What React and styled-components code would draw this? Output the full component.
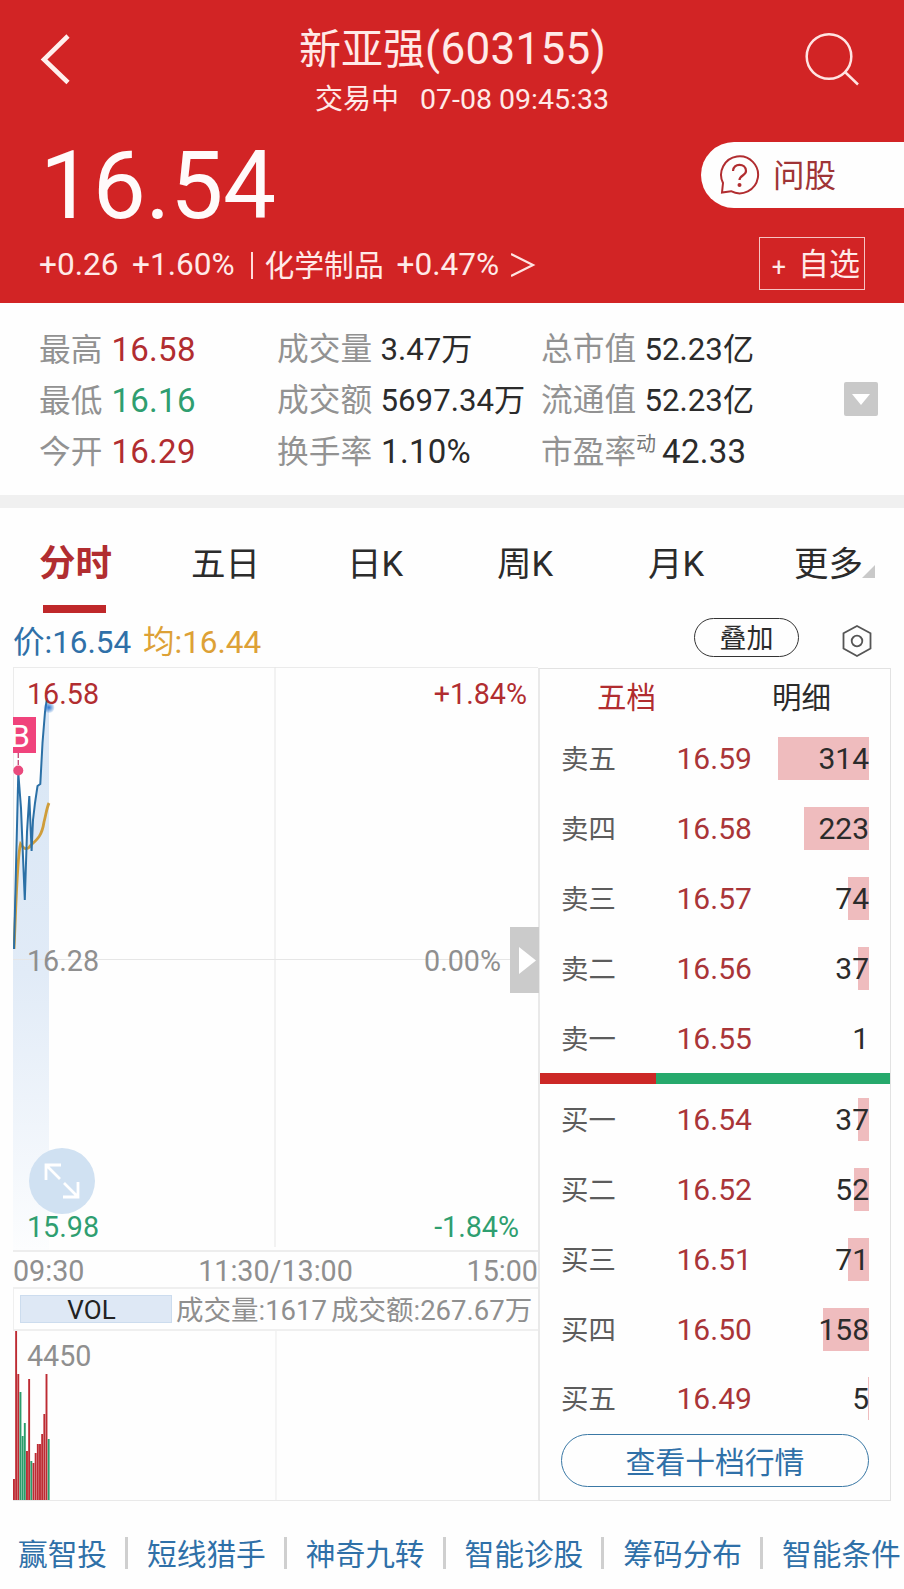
import React, { useState } from "react";
import styled, { createGlobalStyle } from "styled-components";

const RED = "#b12d30";
const GREEN = "#2f9e70";
const BLUE = "#2f70a8";

const stats = [
  [
    { label: "最高", value: "16.58", color: RED },
    { label: "成交量", value: "3.47万", small: true },
    { label: "总市值", value: "52.23亿", small: true },
  ],
  [
    { label: "最低", value: "16.16", color: GREEN },
    { label: "成交额", value: "5697.34万", small: true },
    { label: "流通值", value: "52.23亿", small: true },
  ],
  [
    { label: "今开", value: "16.29", color: RED },
    { label: "换手率", value: "1.10%" },
    { label: "市盈率", value: "42.33", note: "动" },
  ],
];

const periods = ["分时", "五日", "日K", "周K", "月K"];

const sells = [
  ["卖五", "16.59", 314],
  ["卖四", "16.58", 223],
  ["卖三", "16.57", 74],
  ["卖二", "16.56", 37],
  ["卖一", "16.55", 1],
];

const buys = [
  ["买一", "16.54", 37],
  ["买二", "16.52", 52],
  ["买三", "16.51", 71],
  ["买四", "16.50", 158],
  ["买五", "16.49", 5],
];

// [height, is the price going up]
const volumes = [
  [21, true],
  [169, true],
  [126, true],
  [108, false],
  [64, false],
  [77, false],
  [49, true],
  [121, true],
  [39, false],
  [37, true],
  [47, true],
  [56, true],
  [56, true],
  [66, true],
  [86, true],
  [126, true],
  [61, false],
];

const links = [
  "赢智投",
  "短线猎手",
  "神奇九转",
  "智能诊股",
  "筹码分布",
  "智能条件",
];

const PRICE_LINE =
  "M1 282 L3 200 L5.3 106 L8 141 L10 190 L11.8 233 L14 165 L16.3 129 L18.6 184 L20 153 L22 136 L24.5 119 L27.3 117 L29.5 76 L32 45 L34 31";

function App() {
  const [period, setPeriod] = useState("分时");

  return (
    <Page>
      <GlobalStyle />
      <Header>
        <TopBar>
          <svg width="34" height="56" viewBox="0 0 34 56" fill="none">
            <path d="M30 6 L6 29.5 L30 52.5" stroke="#fff0ee" strokeWidth="4.6" />
          </svg>
          <Title>
            <Name>
              新亚强<Code>(603155)</Code>
            </Name>
            <Status>
              <span>交易中</span>
              <Clock>07-08 09:45:33</Clock>
            </Status>
          </Title>
          <svg width="56" height="56" viewBox="0 0 56 56" fill="none">
            <g stroke="#ffe4e2" strokeWidth="2.5">
              <circle cx="26" cy="26.5" r="22.3" />
              <path d="M42 42 L55 54.5" />
            </g>
          </svg>
        </TopBar>
        <PriceRow>
          <Price>16.54</Price>
          <AskPill>
            <svg width="42" height="42" viewBox="0 0 42 42" fill="none">
              <g stroke={RED} strokeWidth="2">
                <path d="M4 29 A18.5 18.5 0 1 1 12 37.2 L3 38.5 Z" />
                <path
                  d="M14 17 C14 8.5 27 9 27 17 C27 21.5 20.5 21.5 20.5 26"
                  strokeWidth="2.2"
                />
              </g>
              <circle cx="20.5" cy="31" r="2" fill={RED} />
            </svg>
            <span>问股</span>
          </AskPill>
        </PriceRow>
        <ChangeRow>
          <span>+0.26</span>
          <span>+1.60%</span>
          <Bar />
          <Sector>化学制品</Sector>
          <span>+0.47%</span>
          <svg width="26" height="26" viewBox="0 0 26 26" fill="none">
            <path d="M0 2 L22 13 L0 24" stroke="#ffe4e2" strokeWidth="2.2" />
          </svg>
          <AddButton>
            <small>+</small>
            <span>自选</span>
          </AddButton>
        </ChangeRow>
      </Header>

      <Stats>
        <StatGrid>
          {stats.flat().map(({ label, value, color, note, small }) => (
            <Stat key={label}>
              <StatLabel>{label}</StatLabel>
              {note && <Note>{note}</Note>}
              <StatValue $color={color} $small={small}>
                {value}
              </StatValue>
            </Stat>
          ))}
        </StatGrid>
        <DropButton>
          <svg width="18" height="11" viewBox="0 0 18 11">
            <path d="M0 0 H18 L9 11 Z" fill="#fff" />
          </svg>
        </DropButton>
      </Stats>

      <Tabs>
        {periods.map((name) => (
          <Tab
            key={name}
            $active={name === period}
            onClick={() => setPeriod(name)}
          >
            {name}
          </Tab>
        ))}
        <Tab>
          更多
          <svg width="13" height="13" viewBox="0 0 13 13">
            <path d="M13 0 V13 H0 Z" fill="#c9c9c9" />
          </svg>
        </Tab>
      </Tabs>

      <InfoRow>
        <Quote $color={BLUE}>价:16.54</Quote>
        <Quote $color="#dda136">均:16.44</Quote>
        <OverlayButton>叠加</OverlayButton>
        <Gear width="30" height="34" viewBox="0 0 30 34" fill="none">
          <g stroke="#555" strokeWidth="1.8">
            <path d="M15 2 L28.5 9.3 V24.5 L15 32 L1.5 24.5 V9.3 Z" />
            <circle cx="15" cy="17" r="5.3" />
          </g>
        </Gear>
      </InfoRow>

      <Board>
        <Charts>
          <PricePlot>
            <svg width="525" height="583" viewBox="0 0 525 583" fill="none">
              <defs>
                <linearGradient id="fade" x1="0" y1="0" x2="0" y2="1">
                  <stop offset="0" stopColor="#d8e6f5" />
                  <stop offset="0.5" stopColor="#e1ebf7" />
                  <stop offset="1" stopColor="#fcfdfe" />
                </linearGradient>
                <radialGradient id="glow">
                  <stop offset="0" stopColor="#2f78d0" />
                  <stop offset="1" stopColor="#2f78d0" stopOpacity="0.1" />
                </radialGradient>
              </defs>
              <path d={`${PRICE_LINE} L36 40 V583 H0 V282 Z`} fill="url(#fade)" />
              <path d="M0 292.5 H525 M262 0 V580" stroke="#e6e6e6" />
              <path
                d="M1 282 C3 240 4 190 7.5 177 C11 182 14 184 18 178 C25 172 29 168 31 155 C33 147 34 140 36 136"
                stroke="#cf9d3b"
                strokeWidth="2.8"
              />
              <path d={PRICE_LINE} stroke="#2b70a6" strokeWidth="2" />
              <circle cx="36" cy="40.5" r="5.5" fill="url(#glow)" />
              <path
                d="M5.3 86 V100"
                stroke="#c4507c"
                strokeDasharray="5 2"
                strokeWidth="1.4"
              />
              <circle cx="5.3" cy="103.5" r="5" fill="#ea4a7d" />
            </svg>
            <BuyMark>
              <span>B</span>
            </BuyMark>
            <PlotLabel $top={12} $color={RED}>
              16.58
            </PlotLabel>
            <PlotLabel $top={12} $right={11} $color={RED}>
              +1.84%
            </PlotLabel>
            <PlotLabel $top={279}>16.28</PlotLabel>
            <PlotLabel $top={279} $right={37}>
              0.00%
            </PlotLabel>
            <PlotLabel $top={545} $color={GREEN}>
              15.98
            </PlotLabel>
            <PlotLabel $top={545} $right={19} $color={GREEN}>
              -1.84%
            </PlotLabel>
            <Expand>
              <svg width="36" height="36" viewBox="0 0 36 36" fill="none">
                <path
                  d="M17 2 H2 V17 M2 2 L16 16 M34 19 V34 H19 M34 34 L20 20"
                  stroke="#fff"
                  strokeWidth="2.8"
                />
              </svg>
            </Expand>
            <SlideTab>
              <svg width="17" height="27" viewBox="0 0 17 27">
                <path d="M0 0 L17 13.5 L0 27 Z" fill="#fff" />
              </svg>
            </SlideTab>
          </PricePlot>
          <TimeAxis>
            <span>09:30</span>
            <span>11:30/13:00</span>
            <span>15:00</span>
          </TimeAxis>
          <VolHeader>
            <VolName>VOL</VolName>
            <VolInfo>成交量:1617</VolInfo>
            <VolInfo>成交额:267.67万</VolInfo>
          </VolHeader>
          <VolPlot>
            <svg width="525" height="169" viewBox="0 0 525 169">
              <path d="M263 0 V169" stroke="#ebebeb" fill="none" />
              {volumes.map(([height, up], i) => (
                <rect
                  key={i}
                  x={i * 2.17}
                  y={169 - height}
                  width="1.9"
                  height={height}
                  fill={up ? "#bd2b33" : "#2b9c6b"}
                />
              ))}
            </svg>
            <PlotLabel $top={10}>4450</PlotLabel>
          </VolPlot>
        </Charts>

        <Depth>
          <DepthTabs>
            <DepthTab $active>五档</DepthTab>
            <DepthTab>明细</DepthTab>
          </DepthTabs>
          {sells.map((order) => (
            <Order key={order[0]} order={order} />
          ))}
          <Ratio>
            <RatioSell />
          </Ratio>
          {buys.map((order) => (
            <Order key={order[0]} order={order} />
          ))}
          <MoreButton>查看十档行情</MoreButton>
        </Depth>
      </Board>

      <Links>
        {links.map((name) => (
          <Link key={name}>{name}</Link>
        ))}
      </Links>
    </Page>
  );
}

function Order({ order: [label, price, amount] }) {
  return (
    <OrderRow>
      <OrderLabel>{label}</OrderLabel>
      <OrderPrice>{price}</OrderPrice>
      <Amount>
        <AmountBar style={{ width: Math.round(amount * 0.29) }} />
        <span>{amount}</span>
      </Amount>
    </OrderRow>
  );
}

const GlobalStyle = createGlobalStyle`
  * {
    box-sizing: border-box;
  }

  body {
    margin: 0;
    background: #fefefe;
  }

  button {
    padding: 0;
    background: none;
    border: none;
    color: inherit;
    font: inherit;
  }

  svg {
    display: block;
    flex-shrink: 0;
  }
`;

const Page = styled.div`
  width: 904px;
  height: 1589px;
  overflow: hidden;
  color: #2b2b2b;
  font-family: Roboto, "Noto Sans CJK SC", sans-serif;
  white-space: nowrap;
`;

const Header = styled.header`
  height: 303px;
  background: #d22425;
  color: #ffeae8;
`;

const TopBar = styled.div`
  display: flex;
  height: 130px;
  padding: 30px 45px 0 38px;

  > svg:last-child {
    margin-left: auto;
  }
`;

const Title = styled.div`
  margin: -6px 0 0 227px;
`;

const Name = styled.div`
  font-size: 42px;
  line-height: 51px;
`;

const Code = styled.span`
  font-size: 44px;
  letter-spacing: 0.3px;
`;

const Status = styled.div`
  display: flex;
  gap: 21px;
  padding-left: 16px;
  font-size: 28px;
  line-height: 49px;
`;

const Clock = styled.span`
  font-size: 28.5px;
`;

const PriceRow = styled.div`
  display: flex;
  justify-content: space-between;
  align-items: flex-start;
  height: 100px;
  padding: 12px 0 0 40px;
`;

const Price = styled.div`
  color: #fffafa;
  font-size: 94.5px;
  line-height: 88px;
  letter-spacing: -0.3px;
`;

const AskPill = styled.button`
  display: flex;
  align-items: center;
  gap: 12px;
  width: 203px;
  height: 66px;
  padding-left: 18px;
  border-radius: 33px 0 0 33px;
  background: #fefefe;
  color: #9f3436;
  font-size: 31.5px;
  line-height: 36px;

  span {
    padding-top: 4px;
  }
`;

const ChangeRow = styled.div`
  display: grid;
  grid-template-columns: 93px 116.5px 16px 132px 114px 1fr 106px;
  align-items: center;
  height: 73px;
  padding: 0 39px 4px 39px;
  font-size: 31.6px;
  line-height: 36px;
`;

const Bar = styled.i`
  width: 2px;
  height: 27px;
  margin-left: 2px;
  margin-top: 2px;
  background: #ffdcda;
`;

const Sector = styled.span`
  padding-top: 2px;
  font-size: 29.8px;
`;

const AddButton = styled.button`
  display: flex;
  align-items: center;
  justify-content: flex-end;
  height: 53px;
  margin-top: -2px;
  padding-right: 4px;
  border: 1px solid #f6c4c3;
  font-size: 31px;

  small {
    margin: 8px 12px 0 0;
    font-size: 25px;
  }

  span {
    padding-top: 3px;
  }
`;

const Stats = styled.section`
  display: flex;
  align-items: center;
  justify-content: space-between;
  height: 205px;
  padding: 3px 26px 0 39px;
  border-bottom: 13px solid #f0f0f0;
`;

const StatGrid = styled.div`
  display: grid;
  grid-template-columns: 238px 264px auto;
  grid-auto-rows: 51px;
`;

const Stat = styled.div`
  display: flex;
  align-items: baseline;
  line-height: 51px;
`;

const StatLabel = styled.span`
  color: #929292;
  font-size: 31.7px;
`;

const Note = styled.sup`
  align-self: flex-start;
  margin: 5px -3px 0 0;
  color: #777;
  font-size: 20px;
  line-height: 26px;
`;

const StatValue = styled.span`
  margin-left: ${({ $small }) => ($small ? 8.5 : 9)}px;
  color: ${({ $color }) => $color || "#2b2b2b"};
  font-size: ${({ $small }) => ($small ? 31.2 : 33)}px;
  letter-spacing: ${({ $small }) => ($small ? 0 : 0.3)}px;
`;

const DropButton = styled.button`
  display: grid;
  place-content: center;
  width: 34px;
  height: 34px;
  margin-bottom: 3px;
  border-radius: 2px;
  background: #c9c9c9;
`;

const Tabs = styled.nav`
  display: grid;
  grid-template-columns: 152px 156px 150px 151px 146px auto;
  height: 105px;
  padding-left: 39px;
`;

const Tab = styled.button`
  display: flex;
  align-items: center;
  position: relative;
  padding-top: 6px;
  color: ${({ $active }) => ($active ? RED : "#2b2b2b")};
  font-size: ${({ $active }) => ($active ? 36.5 : 34.5)}px;
  font-weight: ${({ $active }) => ($active ? 700 : 400)};
  line-height: 40px;

  svg {
    margin: 15px 0 0 -1px;
  }

  &::after {
    content: "";
    display: ${({ $active }) => ($active ? "block" : "none")};
    position: absolute;
    left: 4px;
    bottom: 0;
    width: 63px;
    height: 8px;
    background: #bf282a;
  }
`;

const InfoRow = styled.div`
  display: flex;
  align-items: center;
  height: 54px;
  padding: 0 32px 0 13px;
`;

const Quote = styled.span`
  width: 130px;
  margin-top: 5px;
  color: ${({ $color }) => $color};
  font-size: 31.5px;
  line-height: 36px;
`;

const OverlayButton = styled.button`
  width: 105px;
  height: 39px;
  margin: 0 43px 5px auto;
  padding-top: 3px;
  border: 1px solid #333;
  border-radius: 20px;
  font-size: 27px;
  line-height: 34px;
`;

const Gear = styled.svg`
  margin-top: 2px;
`;

const Board = styled.main`
  display: flex;
  height: 834px;
  margin: 0 13px;
`;

const Charts = styled.div`
  width: 525px;
  color: #8f8f8f;
`;

const PricePlot = styled.div`
  position: relative;
  height: 583px;
  box-shadow: inset 1px 1px #ebebeb;
`;

const PlotLabel = styled.span`
  position: absolute;
  top: ${({ $top }) => $top}px;
  ${({ $right }) => ($right ? `right: ${$right}px` : "left: 14px")};
  color: ${({ $color }) => $color || "#8f8f8f"};
  font-size: 28.7px;
  line-height: 30px;
`;

const BuyMark = styled.div`
  position: absolute;
  top: 50px;
  left: 0;
  width: 23px;
  height: 36px;
  overflow: hidden;
  background: #f0437c;
  color: #fff;
  font-size: 32px;
  line-height: 38px;

  span {
    margin-left: -3px;
  }
`;

const Expand = styled.button`
  position: absolute;
  display: grid;
  place-content: center;
  left: 16px;
  top: 481px;
  width: 66px;
  height: 66px;
  border-radius: 50%;
  background: #d0e1f2;
`;

const SlideTab = styled.button`
  position: absolute;
  display: grid;
  place-content: center end;
  right: -1px;
  top: 260px;
  width: 29px;
  height: 66px;
  padding-right: 3px;
  background: #cbcbcb;
`;

const TimeAxis = styled.div`
  display: flex;
  justify-content: space-between;
  height: 37px;
  border-top: 2px solid #ededed;
  font-size: 28.7px;
  line-height: 39px;
`;

const VolHeader = styled.div`
  display: flex;
  align-items: center;
  height: 44px;
  padding-left: 6px;
  border: solid #efefef;
  border-width: 2px 0 2px 1px;
`;

const VolInfo = styled.span`
  margin: 4px 4px 0 0;
  font-size: 27.5px;
  line-height: 32px;
`;

const VolName = styled.div`
  width: 152px;
  height: 28px;
  margin-right: 4px;
  padding-right: 9px;
  border: 1px solid #ccdcee;
  background: #dee8f5;
  color: #222;
  font-size: 26px;
  line-height: 28px;
  text-align: center;
`;

const VolPlot = styled.div`
  position: relative;
  height: 170px;
  border-bottom: 1px solid #e9e9e9;
`;

const Depth = styled.section`
  width: 353px;
  margin-top: 1px;
  border: 1px solid #e2e2e2;
  border-left: 2px solid #e9e9e9;
`;

const DepthTabs = styled.div`
  display: flex;
  gap: 116px;
  height: 55px;
  padding-left: 57px;
`;

const DepthTab = styled.span`
  color: ${({ $active }) => ($active ? RED : "#2b2b2b")};
  font-size: 29.5px;
  line-height: 59px;
`;

const OrderRow = styled.div`
  display: grid;
  grid-template-columns: 115.5px 90.5px 102px;
  align-items: center;
  height: 69.9px;
  padding-left: 21px;
  font-size: 30px;
`;

const OrderLabel = styled.span`
  padding-top: 3px;
  color: #5c5c5c;
  font-size: 27.4px;
  line-height: 32px;
`;

const OrderPrice = styled.span`
  color: #a93538;
`;

const Amount = styled.div`
  display: flex;
  justify-content: flex-end;
  align-items: center;
  position: relative;
  height: 43px;

  span {
    position: relative;
  }
`;

const AmountBar = styled.i`
  position: absolute;
  right: 0;
  top: 0;
  height: 43px;
  background: #efbcbe;
`;

const Ratio = styled.div`
  height: 11px;
  background: #26a96c;
`;

const RatioSell = styled.div`
  width: 116px;
  height: 11px;
  background: #cc2826;
`;

const MoreButton = styled.button`
  display: block;
  width: 308px;
  height: 53px;
  margin-left: 21px;
  border: 1px solid #3a78a5;
  border-radius: 27px;
  color: ${BLUE};
  font-size: 29.8px;
`;

const Links = styled.nav`
  display: flex;
  align-items: center;
  height: 88px;
  padding: 16px 0 0 18px;
`;

const Link = styled.a`
  padding-top: 4px;
  color: ${BLUE};
  font-size: 29.7px;
  line-height: 28px;

  & + & {
    margin-left: 18px;
    padding-left: 19px;
    border-left: 3px solid #cfcfcf;
  }
`;

export default App;
